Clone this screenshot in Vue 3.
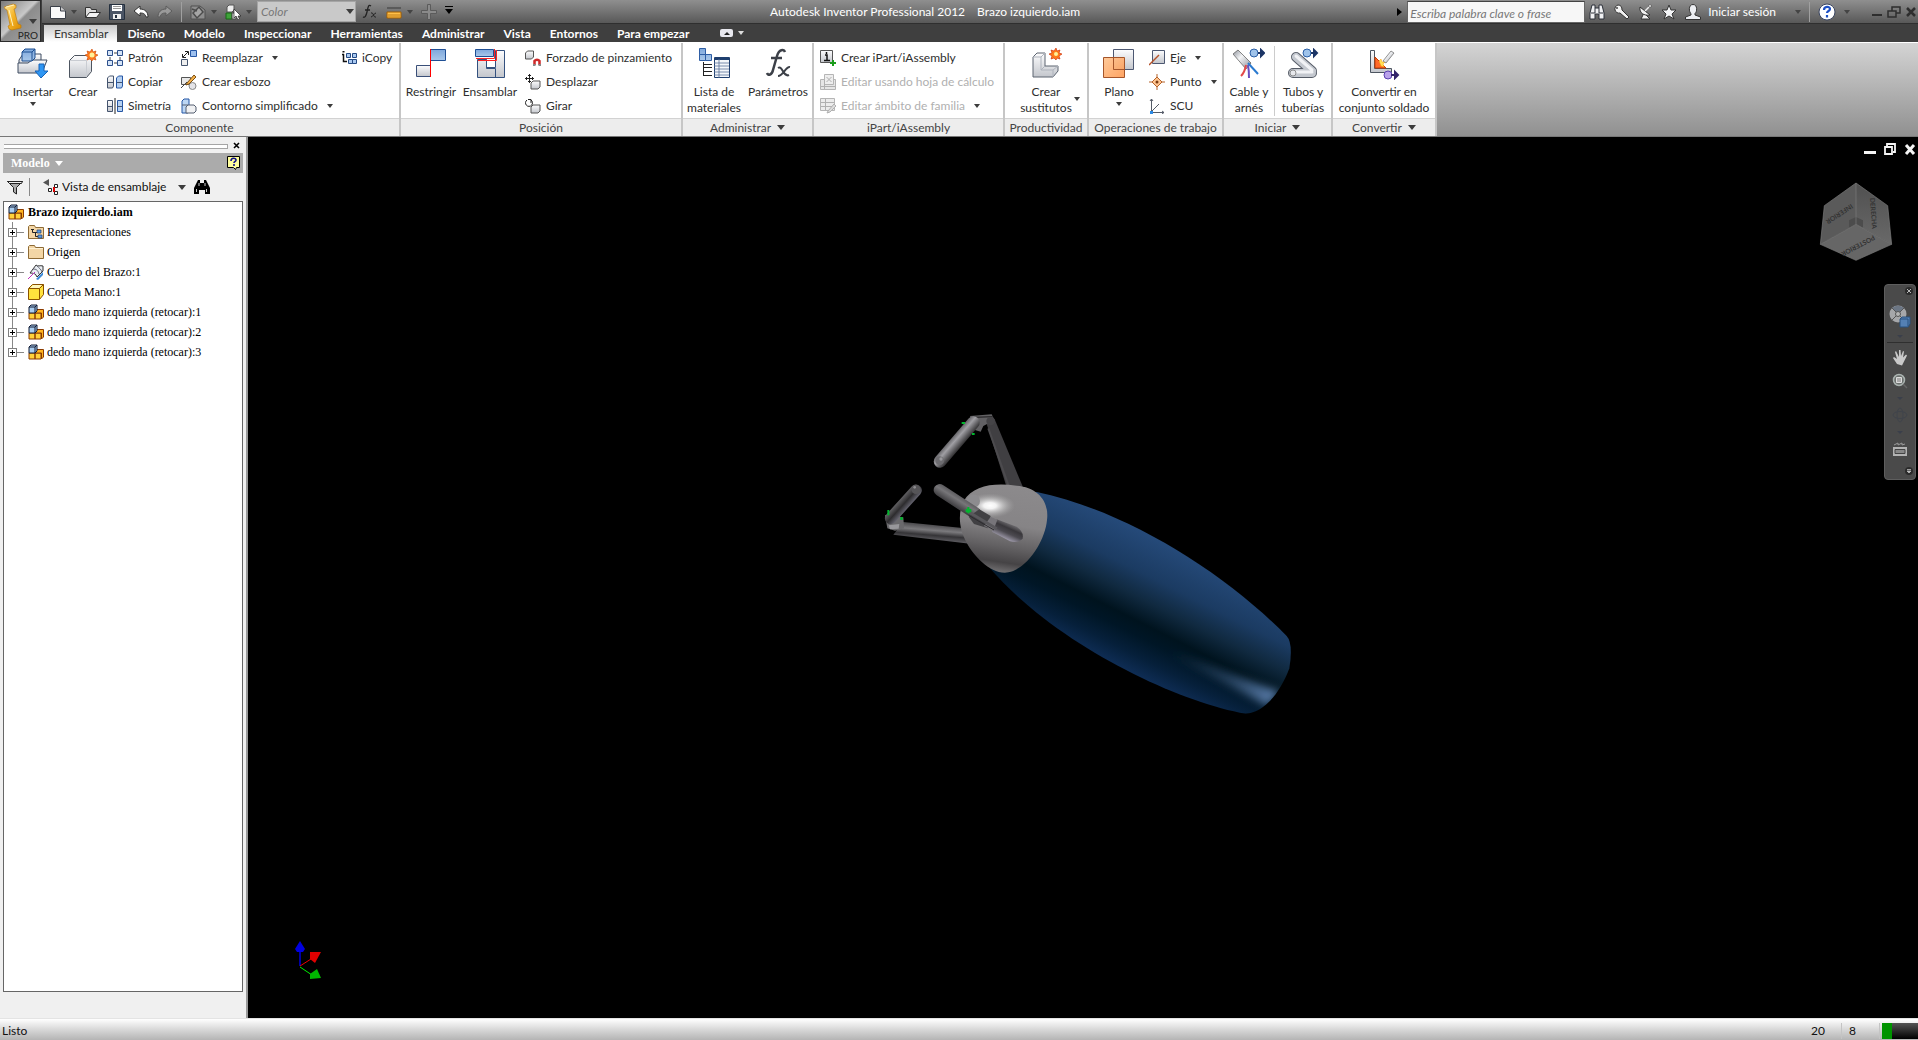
<script setup>
import { ref } from 'vue'

const tabs = ['Ensamblar', 'Diseño', 'Modelo', 'Inspeccionar', 'Herramientas', 'Administrar', 'Vista', 'Entornos', 'Para empezar']
const activeTab = ref('Ensamblar')

const panels = [
  {
    title: 'Componente', cls: 'p-comp',
    items: [
      { big: ['Insertar'], icon: 'place', w: 52, arrow: true },
      { big: ['Crear'], icon: 'create', w: 48 },
      { w: 74, col: [{ t: 'Patrón', icon: 'pattern' }, { t: 'Copiar', icon: 'copy' }, { t: 'Simetría', icon: 'mirror' }] },
      { w: 160, col: [{ t: 'Reemplazar', icon: 'replace', arrow: true }, { t: 'Crear esbozo', icon: 'layout' }, { t: 'Contorno simplificado', icon: 'shrink', arrow: true }] },
      { w: 58, col: [{ t: 'iCopy', icon: 'icopy' }] }
    ]
  },
  {
    title: 'Posición', cls: 'p-pos',
    items: [
      { big: ['Restringir'], icon: 'constrain', w: 60 },
      { big: ['Ensamblar'], icon: 'assemble', w: 58 },
      { w: 156, col: [{ t: 'Forzado de pinzamiento', icon: 'grip' }, { t: 'Desplazar', icon: 'move' }, { t: 'Girar', icon: 'rotate' }] }
    ]
  },
  {
    title: 'Administrar', cls: 'p-adm', menu: true,
    items: [
      { big: ['Lista de', 'materiales'], icon: 'bom', w: 62 },
      { big: ['Parámetros'], icon: 'params', w: 66 }
    ]
  },
  {
    title: 'iPart/iAssembly', cls: 'p-ipart',
    items: [
      { w: 182, col: [{ t: 'Crear iPart/iAssembly', icon: 'ipart' }, { t: 'Editar usando hoja de cálculo', icon: 'sheet', off: true }, { t: 'Editar ámbito de familia', icon: 'scope', off: true, arrow: true }] }
    ]
  },
  { title: 'Productividad', cls: 'p-prod', items: [{ big: ['Crear', 'sustitutos'], icon: 'substitute', w: 82, side: true }] },
  {
    title: 'Operaciones de trabajo', cls: 'p-ops',
    items: [
      { big: ['Plano'], icon: 'plane', w: 60, arrow: true },
      { w: 72, col: [{ t: 'Eje', icon: 'axis', arrow: true }, { t: 'Punto', icon: 'point', arrow: true }, { t: 'SCU', icon: 'ucs' }] }
    ]
  },
  {
    title: 'Iniciar', cls: 'p-ini', menu: true,
    items: [
      { big: ['Cable y', 'arnés'], icon: 'cable', w: 50 },
      { rule: true },
      { big: ['Tubos y', 'tuberías'], icon: 'tube', w: 56 }
    ]
  },
  { title: 'Convertir', cls: 'p-conv', menu: true, items: [{ big: ['Convertir en', 'conjunto soldado'], icon: 'weld', w: 102 }] }
]

const tree = [
  { t: 'Representaciones', icon: 'reps' },
  { t: 'Origen', icon: 'folder' },
  { t: 'Cuerpo del Brazo:1', icon: 'surface' },
  { t: 'Copeta Mano:1', icon: 'part' },
  { t: 'dedo mano izquierda (retocar):1', icon: 'asm' },
  { t: 'dedo mano izquierda (retocar):2', icon: 'asm' },
  { t: 'dedo mano izquierda (retocar):3', icon: 'asm' }
]
</script>

<template>
  <svg class="sprite" aria-hidden="true">
    <defs>
      <linearGradient id="g-steel" x1="0" y1="0" x2="0" y2="1"><stop offset="0" stop-color="#fdfdfe" /><stop offset="1" stop-color="#c3c6cc" /></linearGradient>
      <linearGradient id="g-blue" x1="0" y1="0" x2="0" y2="1"><stop offset="0" stop-color="#7fa8dc" /><stop offset="1" stop-color="#a9c8ea" /></linearGradient>
      <linearGradient id="g-gold" x1="0" y1="0" x2="1" y2="1"><stop offset="0" stop-color="#ffe79a" /><stop offset=".5" stop-color="#f5b52a" /><stop offset="1" stop-color="#d98a00" /></linearGradient>
      <linearGradient id="g-orange" x1="0" y1="0" x2="1" y2="1"><stop offset="0" stop-color="#ffc48f" /><stop offset="1" stop-color="#ff9a52" /></linearGradient>
      <linearGradient id="g-pipe" x1="0" y1="0" x2="1" y2="1"><stop offset="0" stop-color="#8a8f98" /><stop offset=".4" stop-color="#f4f5f7" /><stop offset="1" stop-color="#8a8f98" /></linearGradient>
    </defs>

    <!-- quick access -->
    <symbol id="new" viewBox="0 0 16 16"><path d="M.5 2.500h10l5 4.500v7.500H.5z" fill="#fafafa" stroke="#3a3f48" /><path d="M10.500 2.500V7h5" fill="#ccc" stroke="#3a3f48" /></symbol>
    <symbol id="open" viewBox="0 0 16 16"><path d="M.5 13.500v-10h5l1 2h5v3" fill="#ddd" stroke="#333" /><path d="M.5 13.500l4-5h11l-4 5z" fill="#f3f3f3" stroke="#333" /></symbol>
    <symbol id="save" viewBox="0 0 16 16"><path d="M.5.5h15v15H.5z" fill="#4b5565" stroke="#25303f" /><path d="M3 1h10v6H3z" fill="#fff" /><path d="M4 2.500h8M4 4.500h8" stroke="#999" /><path d="M4 10h8v5H4z" fill="#eee" /><path d="M6 11h2v3H6z" fill="#25303f" /></symbol>
    <symbol id="undo" viewBox="0 0 16 16"><path d="M7 2L1 7l6 5V9c4 0 5 1 6 4h2c0-5-3-8-8-8z" fill="#fff" stroke="#333" /></symbol>
    <symbol id="redo" viewBox="0 0 16 16"><path d="M9 2l6 5-6 5V9c-4 0-5 1-6 4H1c0-5 3-8 8-8z" fill="#9a9a9a" stroke="#5c5c5c" /></symbol>
    <symbol id="update" viewBox="0 0 16 16"><path d="M1 2h9l5 4v9H1z" fill="#8e8e8e" stroke="#505050" /><path d="M3 9l6-6 4 5-6 6zM2 5l5 2" stroke="#4c4c4c" stroke-width="1.500" fill="#a5a5a5" /></symbol>
    <symbol id="pick" viewBox="0 0 16 16"><path d="M2 3l2-2h5v5L7 8H2z" fill="#eee" stroke="#555" /><path d="M1 9h6v6H1z" fill="#3fa33a" stroke="#176a14" /><path d="M7 9h4v6H7z" fill="#ddd" stroke="#444" /><path d="M9 5v9l2-2 2 4 1.500-1-1.500-3h3z" fill="#fff" stroke="#222" stroke-width=".7" /></symbol>
    <symbol id="fx" viewBox="0 0 16 16"><path d="M9 2C6 0 6 4 5 8s-2 6-4 5M3 6h5" fill="none" stroke="#222" stroke-width="1.300" /><path d="M9 9c3-1 2 5 5 4M14 9c-2 0-3 4-5 4" fill="none" stroke="#222" /></symbol>
    <symbol id="measure" viewBox="0 0 16 16"><path d="M1 4h14" stroke="#5a5a5a" stroke-width="2" /><path d="M1 8h14v6H1z" fill="#ffc04a" stroke="#a35f00" /><path d="M3 10v3M5 10v3M7 10v3M9 10v3M11 10v3M13 10v3" stroke="#a35f00" stroke-width=".7" /></symbol>
    <symbol id="plus" viewBox="0 0 16 16"><path d="M6.500.5h3v6h6v3h-6v6h-3v-6h-6v-3h6z" fill="#8a8a8a" stroke="#5b5b5b" /></symbol>
    <symbol id="binoc" viewBox="0 0 16 16"><path d="M3 1h3v3h4V1h3l2 8v6h-5v-5H6v5H1V9z" fill="#f0f1f3" stroke="#2c313a" /><path d="M2 9h4M10 9h4M6 4v5M10 4v5" stroke="#2c313a" /></symbol>
    <symbol id="key" viewBox="0 0 16 16"><path d="M5 1a4 4 0 1 0 2 8l7 6 2-2-7-7c0-3-1-5-4-5z" fill="#f2f2f2" stroke="#333" /><circle cx="4" cy="4" r="1" fill="#444" /></symbol>
    <symbol id="dish" viewBox="0 0 16 16"><path d="M7 9l-3 6h9z" fill="#f2f2f2" stroke="#333" /><path d="M3 3c-1 6 4 9 10 8z" fill="#f2f2f2" stroke="#333" /><path d="M8 7l5-5" stroke="#eee" stroke-width="1.500" /><circle cx="13" cy="2" r="1.400" fill="#fff" stroke="#333" stroke-width=".6" /></symbol>
    <symbol id="star" viewBox="0 0 16 16"><path d="M8 1l2 5h5l-4 4 2 5-5-3-5 3 2-5-4-4h5z" fill="#f4f5f7" stroke="#333" /></symbol>
    <symbol id="user" viewBox="0 0 16 16"><path d="M8 .5c-5 0-4 8-2 9v1.500L.5 13v2.500h15V13L10 11V9.500c2-1 3-9-2-9z" fill="#eceef2" stroke="#333" /></symbol>
    <symbol id="help" viewBox="0 0 18 18"><circle cx="9" cy="9" r="8" fill="#fff" stroke="#3a4560" /><path d="M6 7c0-4 6-4 6-1 0 2-3 2-3 4M9 12v2.500" fill="none" stroke="#1c4fc4" stroke-width="2.200" /></symbol>
    <symbol id="logo" viewBox="0 0 40 40"><path d="M3 6l9-3 3 1v3l-2 1 4 15 3 1v3l-9 2-3-1-1-3 2-1L6 9 4 8z" fill="url(#g-gold)" stroke="#b87708" stroke-width=".6" /><path d="M5 6l8-2M8 9l4 16" stroke="#fff4c5" fill="none" /></symbol>

    <!-- big ribbon icons -->
    <symbol id="place" viewBox="0 0 32 32"><path d="M2 12l4-6h18v14H2z" fill="url(#g-steel)" stroke="#3f4d63" /><path d="M1 25V15h10l4-3h15l-5 13z" fill="url(#g-steel)" stroke="#3f4d63" /><path d="M5 4l3-3h10v9l-3 3H5z" fill="url(#g-blue)" stroke="#1d4e91" /><path d="M5 4h10v9M15 4l3-3" fill="none" stroke="#1d4e91" /><path d="M22 16h5v7h4l-7 7-6-7h4z" fill="#2e96f3" stroke="#1663b8" /></symbol>
    <symbol id="create" viewBox="0 0 32 32"><path d="M2.500 12.500l5-5h17v16l-5 6h-17z" fill="url(#g-steel)" stroke="#4d5560" /><path d="M3 12.500h16.500V29M19.500 12.500l5-5" fill="none" stroke="#c9ccd2" /><path d="M25 1l1 3 3-1-1 3 3 1-3 2 1 3-3-1-1 2-2-2-3 1 1-3-3-2 3-1-1-3 3 1z" fill="#ff7a1c" stroke="#c94300" stroke-width=".6" /><circle cx="25" cy="7" r="2.500" fill="#fff29a" /></symbol>
    <symbol id="constrain" viewBox="0 0 32 32"><path d="M1.500 17.500h14v11h-14z" fill="url(#g-steel)" stroke="#3a4f78" /><path d="M15.500 1.500h15v11h-15z" fill="url(#g-blue)" stroke="#1f4f94" /><path d="M15.500 1v28" stroke="#f00" /></symbol>
    <symbol id="assemble" viewBox="0 0 32 32"><path d="M21.500 2.500h9v27h-27v-18h9v8h9z" fill="url(#g-steel)" stroke="#33517f" /><path d="M12.500 11.500v9h9v9" fill="none" stroke="#33517f" /><path d="M1.500 1.500h18v7h-18z" fill="url(#g-blue)" stroke="#1f4f94" /><path d="M2 10.500h18.500V1M4 12.500h18.500V2" fill="none" stroke="#f22" /></symbol>
    <symbol id="bom" viewBox="0 0 32 32"><path d="M1.500.5h6v6h-6zM1.500 6.500h6v6h-6zM7.500 6.500h6v6h-6z" fill="url(#g-blue)" stroke="#2e5ea5" /><path d="M5.500 14v14M5 16.500h9M5 19.500h9M5 23.500h9M5 27.500h9" stroke="#222" fill="none" /><path d="M16.500 9.500h15v20h-15z" fill="#f4f7fb" stroke="#1f3f6f" /><path d="M16 11h15" stroke="#1f3f6f" stroke-width="2" /><path d="M16 15h15M16 18h15M16 21h15M16 24h15M16 27h15M21 11v19" stroke="#5a7299" stroke-width=".8" /></symbol>
    <symbol id="params" viewBox="0 0 32 32"><path d="M23 4c-1-3-6-3-8 4l-4 14c-1 5-5 6-6 3M9 10h11" fill="none" stroke="#3c4048" stroke-width="2.500" /><path d="M16 20c5-3 5 10 11 7M28 19c-4-1-7 9-12 9" fill="none" stroke="#3c4048" stroke-width="2" /></symbol>
    <symbol id="substitute" viewBox="0 0 32 32"><path d="M3 9l4-4h8v13h13v5l-5 6H3z" fill="url(#g-steel)" stroke="#5c6470" /><path d="M3 9h8v13h12v7M11 9l4-4M11 22l4-4M23 22l5-4" fill="none" stroke="#aeb3bc" /><path d="M26 0l1 3 3-1-1 3 3 1-3 2 1 3-3-1-1 2-2-2-3 1 1-3-3-2 3-1-1-3 3 1z" fill="#ff7a1c" stroke="#c92300" stroke-width=".6" /><circle cx="26" cy="6" r="2" fill="#fff29a" /></symbol>
    <symbol id="plane" viewBox="0 0 32 32"><path d="M10.500 1.500h20v20h-20z" fill="url(#g-steel)" stroke="#4d5872" /><path d="M.5 9.500h21v20H.5z" fill="url(#g-orange)" fill-opacity=".9" stroke="#a5552a" /><path d="M10.500 10v11.500h11" fill="none" stroke="#a5552a" /></symbol>
    <symbol id="cable" viewBox="0 0 32 32"><path d="M0 6l5-4 13 13-5 6z" fill="url(#g-pipe)" stroke="#555" stroke-width=".7" /><path d="M13 17c-1 6-2 8-5 11" stroke="#e24a4a" stroke-width="2" fill="none" /><path d="M15 17c1 5 1 8 1 13" stroke="#6a4fc0" stroke-width="2" fill="none" /><path d="M15 15l10 11" stroke="#2a7ad0" stroke-width="2" /><circle cx="21" cy="5" r="4" fill="#9fc3ea" stroke="#2b5fa6" /><path d="M25 5h4M28 2l3 3-3 3z" stroke="#1c3566" stroke-width="2" fill="#1c3566" /></symbol>
    <symbol id="tube" viewBox="0 0 32 32"><path d="M9 9l16 14M6 25h19" stroke="#555b66" stroke-width="10" stroke-linecap="round" fill="none" /><path d="M9 9l16 14M6 25h19" stroke="#c4c8cf" stroke-width="8" stroke-linecap="round" fill="none" /><path d="M9 8l16 14M6 24h19" stroke="#f1f2f5" stroke-width="3" stroke-linecap="round" fill="none" /><circle cx="6" cy="25" r="3" fill="#e7e8ec" stroke="#777" stroke-width=".8" /><circle cx="20" cy="5" r="4" fill="#9fc3ea" stroke="#2b5fa6" /><path d="M24 5h4M27 2l3 3-3 3z" stroke="#1c3566" stroke-width="2" fill="#1c3566" /></symbol>
    <symbol id="weld" viewBox="0 0 32 32"><path d="M2.500 2.500h4v18h17v4h-21z" fill="url(#g-steel)" stroke="#4d5560" /><path d="M7 9v11h11z" fill="#ff6a2a" stroke="#c93a00" /><path d="M11 13l2-2 1 3h3l-2 2 1 3-3-1z" fill="#ffe35a" stroke="#f90" stroke-width=".5" /><path d="M15 13L23 3l3 2-8 10z" fill="url(#g-pipe)" stroke="#666" stroke-width=".7" /><circle cx="20" cy="27" r="4" fill="#b9a2ea" stroke="#5a3fb0" /><path d="M23 27h5M27 24l3 3-3 3z" stroke="#33246a" stroke-width="2" fill="#33246a" /></symbol>

    <!-- small ribbon icons -->
    <symbol id="pattern" viewBox="0 0 16 16"><path d="M.5.5h5v5h-5zM10.500.5h5v5h-5zM.5 10.500h5v5h-5zM10.500 10.500h5v5h-5z" fill="#d5e4f7" stroke="#2c4f8c" /><path d="M7 3h3M3 7v3M13 7v3M7 13h3" stroke="#444" /></symbol>
    <symbol id="copy" viewBox="0 0 16 16"><path d="M.5 4l2-2h4v10l-1 2h-5z" fill="url(#g-steel)" stroke="#44546e" /><path d="M9.500 4l2-2h4v10l-1 2h-5z" fill="#b5d0f1" stroke="#2556a5" /><path d="M1 8.500h5M10 8.500h5" stroke="#44546e" /></symbol>
    <symbol id="mirror" viewBox="0 0 16 16"><path d="M.5 2.500h5v11h-5z" fill="url(#g-steel)" stroke="#44546e" /><path d="M10.500 2.500h5v11h-5z" fill="#b5d0f1" stroke="#2556a5" /><path d="M1 8.500h5M10 8.500h5" stroke="#44546e" /><path d="M8 0v16" stroke="#222" /></symbol>
    <symbol id="replace" viewBox="0 0 16 16"><path d="M.5 9.500h6v6h-6z" fill="#eee" stroke="#44546e" /><path d="M9.500.5h6v6h-6z" fill="#9dc0ee" stroke="#2556a5" /><path d="M2 7l5-5M4 1.500h3.500V5M1.500 4v3.500H5" fill="none" stroke="#222" /></symbol>
    <symbol id="layout" viewBox="0 0 16 16"><path d="M.5 3.500h9v7h-9z" fill="#e8e8e8" stroke="#555" /><circle cx="11.500" cy="12" r="3.500" fill="#e4e4e8" stroke="#888" /><path d="M6 9l7-8 2 2-7 7-3 1z" fill="#f6b14a" stroke="#7a5015" /><path d="M0 14l6-6" stroke="#444" /></symbol>
    <symbol id="shrink" viewBox="0 0 16 16"><path d="M1 3l2-2h5v12l-1 2H1z" fill="#bcd6f4" stroke="#2556a5" /><path d="M1 7h6M7 7h6l2 2v4l-2 2H5V9z" fill="#f0f1f3" stroke="#555f70" /></symbol>
    <symbol id="icopy" viewBox="0 0 16 16"><path d="M2.500 4v7.500H6M1 4.500h2" stroke="#111" stroke-width="1.500" fill="none" /><path d="M1.500 1h2v1.500h-2z" fill="#111" /><path d="M5.500 3.500h4v4h-4zM11.500 3.500h4v4h-4zM7.500 9.500h4v4h-4zM11.500 9.500h4v4h-4z" fill="#aac9f0" stroke="#244a84" /></symbol>
    <symbol id="grip" viewBox="0 0 16 16"><path d="M.5 3l2-2h6v6l-2 2h-6z" fill="url(#g-steel)" stroke="#555" /><path d="M9.500 15v-4a3 3 0 0 1 5 0v4" fill="none" stroke="#cf2a2a" stroke-width="2.500" /><path d="M8 15h2.500M13.500 15H16" stroke="#888" stroke-width="2" /></symbol>
    <symbol id="move" viewBox="0 0 16 16"><path d="M6 9l2-2h7v6l-2 2H6z" fill="url(#g-steel)" stroke="#555" /><path d="M4.500 0v9M0 4.500h9M3 2l1.500-1.500L6 2M3 7l1.500 1.500L6 7M2 3L.5 4.500 2 6M7 3l1.500 1.500L7 6" fill="none" stroke="#222" /></symbol>
    <symbol id="rotate" viewBox="0 0 16 16"><path d="M6 9l2-2h7v6l-2 2H6z" fill="url(#g-steel)" stroke="#555" /><path d="M6 2a3.500 3.500 0 1 1-4 0M6 5V1.500h-3" fill="none" stroke="#222" /></symbol>
    <symbol id="ipart" viewBox="0 0 16 16"><path d="M.5.5h12v12H.5z" fill="url(#g-steel)" stroke="#555" /><path d="M5 5h2v5.500M4 10.500h6M6.500 2v2" stroke="#111" stroke-width="1.500" fill="none" /><path d="M13 10v6M10 13h6" stroke="#1a9c1a" stroke-width="2" /></symbol>
    <symbol id="sheet" viewBox="0 0 16 16"><path d="M.5 5.500h15v10H.5z" fill="#e6e6e6" stroke="#b5b5b5" /><path d="M4.500.5h9v10h-9z" fill="#eee" stroke="#b5b5b5" /><path d="M6.500 3l5 5M11.500 3l-5 5M1 12.500h14M4.500 6v9" stroke="#b0b0b0" /></symbol>
    <symbol id="scope" viewBox="0 0 16 16"><path d="M.5.5h14v12H.5z" fill="#ececec" stroke="#b5b5b5" /><path d="M1 4.500h13M1 8.500h13M5.500 1v11" stroke="#b0b0b0" /><path d="M8 13l6-7 2 2-6 6-3 1z" fill="#ddd" stroke="#b0b0b0" /></symbol>
    <symbol id="axis" viewBox="0 0 16 16"><path d="M3.500.5h12v13h-12z" fill="url(#g-steel)" stroke="#4d5872" /><path d="M0 15L10 5" stroke="#b5522a" stroke-width="1.500" /></symbol>
    <symbol id="point" viewBox="0 0 16 16"><path d="M8 3l5 5-5 5-5-5z" fill="#ffc48f" stroke="#b5622a" /><path d="M8 0v4M8 12v4M0 8h4M12 8h4" stroke="#b5622a" /><circle cx="8" cy="8" r="1.500" fill="#7a3a10" /></symbol>
    <symbol id="ucs" viewBox="0 0 16 16"><path d="M2.500 14V1M2 14.500h13M2 14l8-8M1 3l1.500-2L4 3M13 13l2 1.500-2 1.500" fill="none" stroke="#555c68" /><path d="M1 13h3v3H1z" fill="#2b8ae6" /></symbol>

    <!-- browser icons -->
    <symbol id="asm" viewBox="0 0 16 16"><path d="M1 9h6v6H1zM7 9h6v6H7z" fill="#ffd23a" stroke="#8a3a00" /><path d="M9 5.500h6.500V13l-2 2V9H7z" fill="#ffb41f" stroke="#8a3a00" /><path d="M1 3l2-2h6v6L7 9H1z" fill="#a9cdf0" stroke="#111a33" /><path d="M1 3h6v6M7 3l2-2" fill="none" stroke="#111a33" /></symbol>
    <symbol id="part" viewBox="0 0 16 16"><path d="M.5 4.500l4-4h11v10l-4 5H.5z" fill="#ffe23d" stroke="#8a5200" /><path d="M1 4.500h10.500V15M11.500 4.500l4-4" fill="none" stroke="#8a5200" /><path d="M2 4l3-3h9l-3 3z" fill="#fff8c0" /></symbol>
    <symbol id="folder" viewBox="0 0 16 16"><path d="M.5 2.500l1-1h5l1 2h8v11H.5z" fill="#f3d6a6" stroke="#8d6a35" /><path d="M1 4.500h14" stroke="#fff1d2" /></symbol>
    <symbol id="reps" viewBox="0 0 16 16"><path d="M.5 2.500l1-1h5l1 2h8v11H.5z" fill="#f3d6a6" stroke="#8d6a35" /><path d="M4.500 5v3.500H9M7.500 9v3.500H10M3 5.500h3" fill="none" stroke="#222" /><path d="M9 6h4v3H9zM10 11h4v3h-4z" fill="#5a9be0" stroke="#1d3d70" stroke-width=".7" /></symbol>
    <symbol id="surface" viewBox="0 0 16 16"><path d="M2 9L8 1c2 2 4 0 7 1v5l-6 6c-1-3-3-4-7-4z" fill="#e9eef3" stroke="#333" /><path d="M5 5c3 0 5 1 6 5M9 2c2 2 4 3 5 6" stroke="#667" fill="none" /><path d="M0 15l7-7" stroke="#c030c0" /><path d="M8 15l7-7v3l-5 5z" fill="#3d8ad8" /></symbol>
    <symbol id="filter" viewBox="0 0 16 16"><path d="M.5 2.500h15l-6 6V15l-3-2V8.500z" fill="#aaa" stroke="#222" /><path d="M.5 2.500h15l-1 2h-12z" fill="#eee" stroke="#222" /></symbol>
    <symbol id="viewasm" viewBox="0 0 16 16"><path d="M0 3.500L6 0v7z" fill="#555" /><path d="M5.500 9.500h3v3h-3zM11.500 5.500h3v3h-3zM11.500 12.500h3v3h-3z" fill="#fff" stroke="#222" /><path d="M11 8v5" stroke="#d00" stroke-width="2" /></symbol>
    <symbol id="find" viewBox="0 0 16 16"><path d="M4 1h2v3h4V1h2l4 8v6h-5v-4H5v4H0V9z" fill="#000" /><path d="M2.500 10v3M12.500 10v3M5 4v3M11 4v3" stroke="#fff" stroke-width=".8" /></symbol>
    <symbol id="qmark" viewBox="0 0 14 14"><path d="M.5.5h12v11h-3l-1 2-2-2h-6z" fill="#ffff9c" stroke="#000" /><path d="M4 5c0-4 5-3 5-1 0 2-2 1-2 3M7 8v2" fill="none" stroke="#10108a" stroke-width="1.600" /></symbol>
  </svg>

  <div class="app">
    <header class="top">
      <button class="logo" aria-label="Menú de aplicación">
        <svg class="logo-art"><use href="#logo" /></svg>
        <i class="tri logo-tri"></i><span class="pro">PRO</span>
      </button>
      <div class="titlebar">
        <div class="quick">
          <button aria-label="Nuevo"><svg><use href="#new" /></svg></button><i class="tri dim"></i>
          <button aria-label="Abrir"><svg><use href="#open" /></svg></button>
          <button aria-label="Guardar"><svg><use href="#save" /></svg></button>
          <button aria-label="Deshacer"><svg><use href="#undo" /></svg></button>
          <button aria-label="Rehacer"><svg><use href="#redo" /></svg></button>
          <i class="vsep"></i>
          <button aria-label="Actualizar"><svg><use href="#update" /></svg></button><i class="tri dim"></i>
          <button aria-label="Seleccionar"><svg><use href="#pick" /></svg></button><i class="tri dim"></i>
          <span class="color"><select aria-label="Color"><option>Color</option></select><i class="tri"></i></span>
          <button aria-label="Funciones"><svg><use href="#fx" /></svg></button>
          <button aria-label="Medir"><svg><use href="#measure" /></svg></button><i class="tri dim"></i>
          <button aria-label="Añadir"><svg><use href="#plus" /></svg></button><i class="tri over"></i>
        </div>
        <h1 class="title"><span>Autodesk Inventor Professional 2012</span><span>Brazo izquierdo.iam</span></h1>
        <div class="info">
          <i class="right"></i>
          <input class="search" type="text" aria-label="Buscar" placeholder="Escriba palabra clave o frase" />
          <button aria-label="Buscar"><svg><use href="#binoc" /></svg></button>
          <button aria-label="Suscripción"><svg><use href="#key" /></svg></button>
          <button aria-label="Comunicaciones"><svg><use href="#dish" /></svg></button>
          <button aria-label="Favoritos"><svg><use href="#star" /></svg></button>
          <button class="login"><svg><use href="#user" /></svg>Iniciar sesión</button>
          <i class="tri dim"></i><i class="vsep"></i>
          <button aria-label="Ayuda"><svg class="i18"><use href="#help" /></svg></button><i class="tri dim"></i>
          <div class="win">
            <button aria-label="Minimizar"><svg viewBox="0 0 14 16"><path d="M2 11h10" stroke="#2e2e2e" stroke-width="2" /></svg></button>
            <button aria-label="Restaurar"><svg viewBox="0 0 14 16"><path d="M5 7V3h8v6h-4M1 7h8v6H1z" fill="none" stroke="#2e2e2e" stroke-width="1.500" /></svg></button>
            <button aria-label="Cerrar"><svg viewBox="0 0 14 16"><path d="M3 4l8 8M11 4l-8 8" stroke="#2e2e2e" stroke-width="2.500" /></svg></button>
          </div>
        </div>
      </div>
      <nav class="tabs">
        <button v-for="t in tabs" :key="t" :class="{ active: t === activeTab }" @click="activeTab = t">{{ t }}</button>
        <button class="pill" aria-label="Minimizar cinta"><i></i></button><i class="tri light"></i>
      </nav>
    </header>

    <section class="ribbon">
      <div v-for="p in panels" :key="p.title" class="panel" :class="p.cls">
        <div class="tools">
          <template v-for="(it, i) in p.items" :key="i">
            <button v-if="it.big" class="big" :style="{ width: it.w + 'px' }">
              <svg><use :href="'#' + it.icon" /></svg>
              <span v-for="l in it.big" :key="l">{{ l }}</span>
              <i v-if="it.arrow" class="tri small"></i>
              <i v-if="it.side" class="tri small side"></i>
            </button>
            <i v-else-if="it.rule" class="rule"></i>
            <div v-else class="col" :style="{ width: it.w + 'px' }">
              <button v-for="b in it.col" :key="b.t" :disabled="b.off">
                <svg><use :href="'#' + b.icon" /></svg>{{ b.t }}<i v-if="b.arrow" class="tri small"></i>
              </button>
            </div>
          </template>
        </div>
        <h2>{{ p.title }}<i v-if="p.menu" class="tri"></i></h2>
      </div>
    </section>

    <main class="work">
      <aside class="browser">
        <div class="gripbar"><i></i><button aria-label="Cerrar panel"><svg viewBox="0 0 8 8"><path d="M1 1l5 5M6 1L1 6" stroke="#000" stroke-width="1.600" /></svg></button></div>
        <div class="bhead"><button>Modelo<i class="tri white"></i></button><button aria-label="Ayuda"><svg><use href="#qmark" /></svg></button></div>
        <div class="btools">
          <button aria-label="Filtro"><svg><use href="#filter" /></svg></button>
          <i class="bsep"></i>
          <svg><use href="#viewasm" /></svg>
          <select aria-label="Vista"><option>Vista de ensamblaje</option></select><i class="tri"></i>
          <button aria-label="Buscar"><svg><use href="#find" /></svg></button>
        </div>
        <div class="tree">
          <div class="root"><svg><use href="#asm" /></svg>Brazo izquierdo.iam</div>
          <ul>
            <li v-for="n in tree" :key="n.t"><button class="exp" aria-label="Expandir"></button><svg><use :href="'#' + n.icon" /></svg>{{ n.t }}</li>
          </ul>
        </div>
      </aside>

      <section class="view">
        <svg class="arm" viewBox="0 0 1380 1020">
          <defs>
            <linearGradient id="a-body" gradientUnits="userSpaceOnUse" x1="4" y1="-9" x2="-175" y2="347"><stop offset="0" stop-color="#264b7b" /><stop offset=".3" stop-color="#1b3b62" /><stop offset=".48" stop-color="#10293f" /><stop offset=".64" stop-color="#00131e" /><stop offset=".74" stop-color="#001626" /><stop offset=".88" stop-color="#06203b" /><stop offset="1" stop-color="#0e2c53" /></linearGradient>
            <linearGradient id="a-shine" gradientUnits="userSpaceOnUse" x1="900" y1="775" x2="1235" y2="935"><stop offset="0" stop-color="#3d5b80" stop-opacity="0" /><stop offset=".6" stop-color="#3d5b80" stop-opacity=".6" /><stop offset="1" stop-color="#587ba8" /></linearGradient>
            <linearGradient id="a-cup" x1=".6" y1="0" x2=".45" y2="1"><stop offset="0" stop-color="#8c8a8c" /><stop offset=".45" stop-color="#868486" /><stop offset=".7" stop-color="#636163" /><stop offset=".88" stop-color="#454345" /><stop offset="1" stop-color="#747274" /></linearGradient>
            <radialGradient id="a-glow"><stop offset="0" stop-color="#fff" /><stop offset=".25" stop-color="#fff" stop-opacity=".9" /><stop offset="1" stop-color="#aaa" stop-opacity="0" /></radialGradient>
            <linearGradient id="a-f1" gradientUnits="userSpaceOnUse" x1="275" y1="135" x2="307" y2="163"><stop offset="0" stop-color="#4b4a4d" /><stop offset=".45" stop-color="#a09fa4" /><stop offset="1" stop-color="#39383a" /></linearGradient>
            <linearGradient id="a-f2" gradientUnits="userSpaceOnUse" x1="114" y1="330" x2="145" y2="358"><stop offset="0" stop-color="#6a696c" /><stop offset=".5" stop-color="#2d2c2e" /><stop offset="1" stop-color="#706f7c" /></linearGradient>
            <linearGradient id="a-f3" gradientUnits="userSpaceOnUse" x1="310" y1="315" x2="288" y2="350"><stop offset="0" stop-color="#4c4b4e" /><stop offset=".5" stop-color="#777679" /><stop offset="1" stop-color="#444346" /></linearGradient>
            <linearGradient id="a-f4" gradientUnits="userSpaceOnUse" x1="222" y1="404" x2="218" y2="453"><stop offset="0" stop-color="#49484b" /><stop offset=".35" stop-color="#7b7a7d" /><stop offset=".65" stop-color="#353437" /><stop offset="1" stop-color="#626166" /></linearGradient>
            <linearGradient id="a-slot" gradientUnits="userSpaceOnUse" x1="455" y1="400" x2="435" y2="445"><stop offset="0" stop-color="#777579" /><stop offset=".35" stop-color="#39373b" /><stop offset=".65" stop-color="#4c4a50" /><stop offset="1" stop-color="#9793a2" /></linearGradient>
            <clipPath id="a-clip"><path d="M527 305C800 362 1090 545 1280 738Q1300 760 1288 835C1262 905 1215 967 1157 971C950 935 590 765 390 535z" /></clipPath>
            <filter id="a-soft" x="-20%" y="-20%" width="140%" height="140%"><feGaussianBlur stdDeviation="12" /></filter>
          </defs>
          <path d="M378 95L404 88L489 292H440z" fill="#403f42" /><path d="M385 115L445 285" stroke="#4c4b4e" stroke-width="6" />
          <path d="M130 396L330 416V461L100 434z" fill="url(#a-f4)" />
          <g clip-path="url(#a-clip)">
            <path d="M380 290H1300V980H380z" fill="url(#a-body)" />
            <path d="M900 775L1260 905L1222 948z" fill="url(#a-shine)" filter="url(#a-soft)" />
          </g>
          <path d="M311 333C340 286 400 278 470 287C535 292 568 335 561 390C555 452 505 534 445 547C395 556 340 497 320 458C294 412 295 365 311 333z" fill="url(#a-cup)" />
          <ellipse cx="390" cy="347" rx="75" ry="37" fill="url(#a-glow)" />
          <ellipse cx="340" cy="333" rx="20" ry="20" fill="#8d8c8f" />
          <path d="M410 388L470 410Q492 425 488 445Q478 460 450 454L396 425z" fill="url(#a-slot)" />
          <path d="M239 300L345 369" stroke="url(#a-f3)" stroke-width="36" stroke-linecap="round" />
          <path d="M358 358L392 378L384 415L342 402L326 380z" fill="#414043" /><path d="M392 380L412 390L400 421L372 408z" fill="#77757a" />
          <path d="M326 366L410 416" stroke="#59585c" stroke-width="9" /><path d="M326 376L402 420" stroke="#2c2b2e" stroke-width="3" />
          <path d="M330 78L395 73L403 90L370 108L362 125L345 120z" fill="#626164" /><path d="M342 82L398 80" stroke="#29282a" stroke-width="4" /><circle cx="392" cy="93" r="13" fill="#454447" />
          <path d="M240 214L340 98" stroke="url(#a-f1)" stroke-width="38" stroke-linecap="round" /><circle cx="239" cy="212" r="13" fill="#6d6c70" /><circle cx="243" cy="207" r="5" fill="#99989c" />
          <path d="M75 375L130 382L132 415L105 422L82 415z" fill="#6a696c" />
          <path d="M168 301L92 385" stroke="url(#a-f2)" stroke-width="35" stroke-linecap="round" /><circle cx="168" cy="298" r="14" fill="#565558" /><circle cx="164" cy="292" r="4" fill="#8d8c8f" />
          <path d="M86 406L118 402L116 416L90 418z" fill="#98979b" />
          <path d="M305 96h10v6h-10zM336 129h8v6h-8zM82 360h6v16h-6zM121 381h7v9h-7zM317 357h17v10h-17zM322 351h6v19h-6z" fill="#00b62d" />
        </svg>

        <svg class="triad" viewBox="0 0 30 40"><path d="M7 26V10" stroke="#0000ff" stroke-width="1.300" /><path d="M7 1l5 8-2 3H4l-2-3z" fill="#0000e0" /><path d="M7 26l11-7" stroke="#e00" /><path d="M17 12h11l-6 11-5-4z" fill="#e00000" /><path d="M7 27l12 8" stroke="#0e0" /><path d="M24 29l4 9-11 1v-5z" fill="#00b800" /></svg>

        <div class="docwin">
          <button aria-label="Minimizar documento"><svg viewBox="0 0 14 14"><path d="M1 8h12v3H1z" fill="#f4f4f4" /></svg></button>
          <button aria-label="Restaurar documento"><svg viewBox="0 0 14 14"><path d="M4 3V1h8v8h-2M2 4h7v7H2z" fill="none" stroke="#f4f4f4" stroke-width="1.800" /></svg></button>
          <button aria-label="Cerrar documento"><svg viewBox="0 0 14 14"><path d="M3 2l8 9M11 2l-8 9" stroke="#f4f4f4" stroke-width="3" /></svg></button>
        </div>

        <svg class="cube" viewBox="0 0 216 234">
          <defs><linearGradient id="c-side" x1="0" y1="0" x2="0" y2="1"><stop offset="0" stop-color="#505050" /><stop offset="1" stop-color="#696969" /></linearGradient></defs>
          <path d="M108 0L13 68L1 184L108 124z" fill="#5a5a5a" /><path d="M108 0L203 68L215 184L108 124z" fill="url(#c-side)" /><path d="M108 124L1 184L108 232L215 184z" fill="#666" />
          <path d="M87 112l21-10 21 10v22l-21-10-21 10z" fill="#4c4c4c" />
          <path d="M108 0L13 68L1 184L108 232L215 184L203 68zV124L1 184M108 124L215 184" fill="none" stroke="#7c7c7c" stroke-width="2" />
          <g fill="#333" font-size="20" font-weight="700">
            <text transform="translate(93 62) rotate(147)">INFERIOR</text>
            <text transform="translate(150 45) rotate(86)">DERECHA</text>
            <text transform="translate(160 156) rotate(152)">POSTERIOR</text>
          </g>
        </svg>

        <div class="navbar">
          <button class="mini" aria-label="Cerrar barra"><svg viewBox="0 0 8 8"><circle cx="4" cy="4" r="4" fill="#2b2b2b" /><path d="M2 2l4 4M6 2L2 6" stroke="#bbb" /></svg></button>
          <button class="wheel" aria-label="Rueda de navegación"><svg viewBox="0 0 22 22"><circle cx="9" cy="9" r="8.500" fill="#a6a7aa" /><path d="M3 3a9 9 0 0 1 12 0l-4 4H7z" fill="#6c7684" /><path d="M3 3l4 4M15 3l-4 4M3 15l4-4M15 15l-4-4" stroke="#555" /><circle cx="9" cy="9" r="2.500" fill="#b5b5b5" stroke="#555" /><path d="M11 14l2-2h8v7l-2 3h-8z" fill="#5480b4" stroke="#28507f" /><path d="M11 14h8v7" fill="none" stroke="#28507f" /></svg></button>
          <i class="tri navy"></i><i class="hline"></i>
          <button aria-label="Encuadre"><svg viewBox="0 0 16 16"><path d="M5 15l-4-6 1-1 3 2-2-7 1-1 3 6V1h1.500l.5 6 2-5 1 .5-1 6 3-3 1 1-3 6-2 4z" fill="#c9c9c9" /></svg></button>
          <button aria-label="Zoom"><svg viewBox="0 0 16 16"><circle cx="7" cy="7" r="5.500" fill="#6c706e" stroke="#aab3b0" stroke-width="1.500" /><path d="M4.500 4.500h5v5h-5z" fill="#aaa" stroke="#ddd" /><path d="M11 11l4 4" stroke="#666" stroke-width="1.500" /></svg></button>
          <i class="tri navy"></i>
          <button aria-label="Órbita"><svg viewBox="0 0 16 16"><ellipse cx="8" cy="8" rx="7" ry="3.500" fill="none" stroke="#40444a" /><ellipse cx="8" cy="8" rx="3" ry="7" fill="none" stroke="#40444a" /></svg></button>
          <i class="tri navy"></i>
          <button aria-label="Mirar a"><svg viewBox="0 0 16 16"><path d="M2 4l4-2v2l4-2v2l3-1" stroke="#999" fill="none" /><path d="M1 6h14v9H1z" fill="#b3b3b3" /><path d="M3 8.500h10v4H3z" fill="#888" stroke="#444" /></svg></button>
          <button class="mini low" aria-label="Personalizar"><svg viewBox="0 0 8 8"><circle cx="4" cy="4" r="4" fill="#2b2b2b" /><path d="M2 2.500h4M2 4h4L4 6z" stroke="#bbb" stroke-width=".8" fill="#bbb" /></svg></button>
        </div>
      </section>
    </main>

    <footer class="status"><span class="msg">Listo</span><span class="num">20</span><span class="num two">8</span><i class="meter"></i></footer>
  </div>
</template>

<style>
body { margin: 0; background: #000; }
</style>

<style scoped>
.app { min-height: 100vh; display: flex; flex-direction: column; font: 12px/16px Lato, "Open Sans", sans-serif; color: #2e2e2e; }
button { border: 0; background: none; padding: 0; margin: 0; font: inherit; color: inherit; display: flex; align-items: center; white-space: nowrap; }
svg { width: 16px; height: 16px; flex: none; display: block; overflow: visible; }
.sprite { position: absolute; top: 0; width: 0; height: 0; overflow: hidden; }
h1, h2, ul { margin: 0; padding: 0; font-size: 12px; font-weight: 400; list-style: none; }
.tri { flex: none; width: 0; height: 0; border: 4px solid transparent; border-top: 5px solid #3c3c3c; border-bottom: 0; }
.tri.small { border-width: 3px; border-top-width: 4px; border-bottom: 0; }
.tri.dim { border-width: 3px; border-top: 4px solid #444; border-bottom: 0; }
.tri.light { border-width: 3px; border-top: 4px solid #ddd; border-bottom: 0; }
.tri.white { border-top-color: #fff; }

.top { display: grid; grid-template: 24px 18px / 42px 1fr; background: #3f3f3f; border-bottom: 1px solid #fff; }
.logo { grid-row: 1 / 3; position: relative; box-sizing: border-box; width: 41px; background: linear-gradient(135deg, #7a7a7a, #c9c9c9 45%, #8c8c8c 50%, #a5a5a5); border: 1px solid #2b2b2b; }
.logo-art { position: absolute; left: 0; top: 0; width: 40px; height: 40px; }
.logo-tri { position: absolute; left: 28px; top: 18px; }
.pro { position: absolute; right: 2px; bottom: 0; font-size: 10px; line-height: 12px; color: #222; }
.titlebar { display: flex; justify-content: space-between; align-items: center; padding-left: 8px; background: linear-gradient(#8f8f8f, #747474 50%, #585858); border-bottom: 1px solid #2f2f2f; color: #fff; }
.quick, .info { display: flex; align-items: center; height: 22px; }
.quick { gap: 8px; }
.quick .dim { margin-left: -3px; }
.vsep { width: 1px; height: 20px; background: #a0a0a0; }
.over { border-top-color: #000; position: relative; }
.over::before { content: ""; position: absolute; left: -4px; top: -8px; width: 8px; height: 1px; background: #000; }
.color { display: flex; align-items: center; width: 99px; height: 21px; box-sizing: border-box; border: 1px solid #a5a5a5; background: #c9c9c9; padding-right: 1px; margin: 0 -2px 0 -3px; }
select { appearance: none; border: 0; background: none; margin: 0; padding: 0; font: inherit; color: inherit; }
.color select { flex: 1; padding-left: 3px; font-style: italic; color: #777; }
.title { display: flex; gap: 12px; white-space: nowrap; line-height: 22px; }
.info { gap: 8px; }
.right { border: 4px solid transparent; border-left: 5px solid #000; border-right: 0; margin-right: -3px; }
.search { box-sizing: border-box; width: 178px; height: 22px; padding: 4px 2px 0; border: 1px solid #666; border-top-color: #444; background: #f7f7f7; font: inherit; font-style: italic; margin: 0 -4px 0 0; }
.search::placeholder { color: #777; opacity: 1; }
.login { gap: 7px; margin-right: 11px; }
.i18 { width: 18px; height: 18px; }
.win { display: flex; gap: 3px; padding-left: 12px; }
.win svg { width: 14px; }

.tabs { display: flex; align-items: center; padding-left: 2px; }
.tabs button { height: 17px; margin-top: 1px; padding: 0 9px 0 10px; color: #fff; font-weight: 700; }
.tabs .active { color: #333; font-weight: 400; background: linear-gradient(#c9c9c9, #fff); }
.tabs .pill { margin: 0 5px 0 22px; padding: 0 4px; width: 13px; height: 8px; box-sizing: border-box; background: #e8e8ee; border-radius: 2px; }
.pill i { border: 3px solid transparent; border-bottom: 3px solid #222; border-top: 0; }

.ribbon { box-sizing: border-box; display: flex; height: 94px; background: linear-gradient(#d4d4d4, #909090); border-bottom: 1px solid #777; }
.panel { box-sizing: border-box; flex: none; display: flex; flex-direction: column; background: #fff; border-right: 2px solid #c6c6c6; }
.p-comp { width: 401px; } .p-pos { width: 282px; } .p-adm { width: 131px; } .p-ipart { width: 191px; }
.p-prod { width: 84px; } .p-ops { width: 135px; } .p-ini { width: 109px; } .p-conv { width: 104px; }
.tools { flex: 1; display: flex; padding-top: 3px; }
.p-comp .tools { padding-left: 7px; }
.p-ipart .tools { padding-left: 6px; }
.p-pos .col { margin-left: 6px; }
.panel h2 { height: 17px; line-height: 17px; background: #ededed; border-top: 1px solid #d2d2d2; display: flex; align-items: center; justify-content: center; gap: 6px; color: #444; }
.big { flex: none; position: relative; flex-direction: column; padding-top: 2px; height: 71px; }
.big svg { width: 32px; height: 32px; margin-bottom: 4px; }
.big .tri { margin-top: 2px; }
.big .side { position: absolute; right: 7px; bottom: 16px; }
.col { flex: none; }
.col button { height: 24px; gap: 5px; }
.col .tri { margin-left: 4px; }
.col button:disabled { color: #b0b0b0; }
.rule { width: 1px; background: #ccc; height: 70px; }

.work { flex: 1; display: flex; }
.browser { flex: none; box-sizing: border-box; width: 248px; padding: 2px 3px 26px; border-right: 2px solid #999; background: #f0f0f0; display: flex; flex-direction: column; color: #111; }
.gripbar { display: flex; align-items: center; height: 14px; gap: 5px; padding: 0 1px; }
.gripbar > i { flex: 1; height: 3px; border: 1px solid #a5a5a5; border-left: 0; background: #fff; }
.gripbar svg { width: 8px; height: 8px; }
.gripbar button { padding-right: 1px; }
.bhead { height: 20px; background: #ababab; display: flex; justify-content: space-between; padding: 0 2px 0 8px; font: bold 12px/20px "Liberation Serif", serif; color: #fff; }
.bhead button { gap: 5px; }
.bhead svg { width: 14px; height: 14px; }
.btools { display: flex; align-items: center; height: 28px; padding-left: 4px; }
.bsep { width: 1px; height: 18px; background: #888; margin: 0 13px 0 6px; }
.btools select { margin: 0 10px 0 3px; color: #111; width: 106px; }
.btools .tri { margin-right: 8px; }
.tree { flex: 1; background: #fff; border: 1px solid #666; padding-left: 4px; font: 12px/20px "Liberation Serif", serif; color: #000; }
.root { display: flex; align-items: center; gap: 4px; font-weight: 700; height: 20px; }
.tree li { display: flex; align-items: center; height: 20px; gap: 3px; position: relative; }
.tree li::before { content: ""; position: absolute; left: 4px; top: 0; height: 20px; width: 1px; background: #888; }
.tree li:last-child::before { height: 10px; }
.exp { position: relative; width: 9px; height: 9px; margin-right: 8px; border: 1px solid #808080; box-sizing: border-box; background: linear-gradient(#000, #000) center / 5px 1px no-repeat, linear-gradient(#000, #000) center / 1px 5px no-repeat, #fff; }
.exp::after { content: ""; position: absolute; left: 8px; top: 3px; width: 7px; height: 1px; background: #888; }

.view { flex: 1; position: relative; background: #000; min-height: 560px; overflow: hidden; }
.arm { position: absolute; left: calc(50% - 223px); top: calc(50% - 188px); width: 460px; height: 340px; }
.triad { position: absolute; left: 45px; bottom: 38px; width: 30px; height: 40px; }
.docwin { position: absolute; right: 1px; top: 6px; display: flex; gap: 6px; }
.docwin svg { width: 14px; height: 14px; }
.cube { position: absolute; right: 26px; top: 46px; width: 72px; height: 78px; }
.navbar { position: absolute; right: 2px; top: 147px; width: 32px; height: 196px; box-sizing: border-box; background: #4a4a4a; border: 1px solid #5e5e5e; border-radius: 4px; display: flex; flex-direction: column; align-items: center; }
.navbar .mini { align-self: flex-end; padding: 2px 2px 10px; }
.navbar .low { padding: 10px 2px 0; }
.mini svg { width: 8px; height: 8px; }
.wheel svg { width: 22px; height: 22px; }
.navbar .navy { border-width: 3px; border-top: 3px solid #3a3f4a; border-bottom: 0; margin: 8px 0 7px; }
.navbar .wheel + .navy { margin: 8px 0 4px; }
.hline { width: 26px; height: 1px; background: #2f2f2f; margin-bottom: 6px; }
.hline + button { margin-bottom: 8px; }

.status { box-sizing: border-box; height: 22px; display: flex; align-items: center; background: linear-gradient(#fff, #d8d8d8 50%, #b4b4b4); border-top: 1px solid #e4e4e4; color: #111; padding-top: 2px; }
.msg { flex: 1; padding-left: 2px; }
.num { box-sizing: border-box; width: 34px; padding-left: 3px; border-right: 1px solid #c4c4c4; }
.num.two { width: 38px; padding-left: 7px; }
.meter { width: 36px; height: 16px; margin-left: 2px; background: linear-gradient(90deg, #009400 10px, transparent 10px), linear-gradient(#555, #000); }
</style>
